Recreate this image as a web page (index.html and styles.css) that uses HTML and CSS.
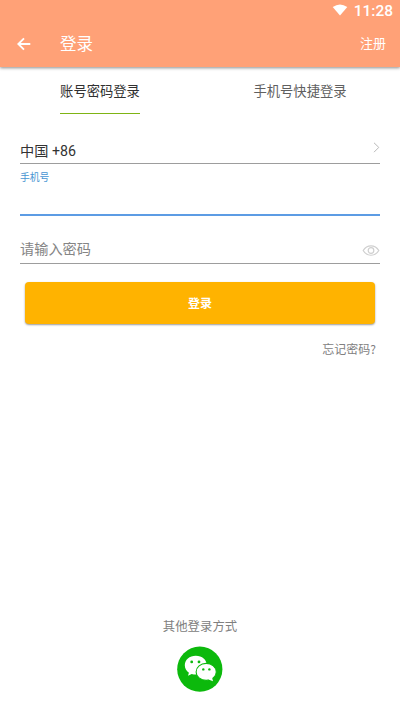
FILE: index.html
```html
<!DOCTYPE html>
<html lang="zh-CN">
<head>
<meta charset="utf-8">
<title>登录</title>
<link rel="stylesheet" href="styles.css">
</head>
<body>
<header class="header">
  <div class="status">
    <svg class="wifi" width="16" height="12" viewBox="0 0 16 12"><path d="M0.7 3Q8-2.2 15.3 3L8 11.6Z" fill="#fff"/></svg>
    <span class="clock">11:28</span>
  </div>
  <div class="toolbar">
    <svg class="back" width="14" height="14" viewBox="0 0 14 14"><path d="M13.300 7H1.5M7 1.3L1.3 7L7 12.7" fill="none" stroke="#fff" stroke-width="1.9"/></svg>
    <h1 class="title">登录</h1>
    <a class="register">注册</a>
  </div>
</header>
<nav class="tabs">
  <div class="tab"><span class="tab-label active">账号密码登录</span></div>
  <div class="tab"><span class="tab-label">手机号快捷登录</span></div>
</nav>
<main class="form">
  <div class="field country">
    <span>中国 +86</span>
    <svg width="7" height="11" viewBox="0 0 7 11"><path d="M1 .8L5.8 5.4L1 10.2" fill="none" stroke="#b8b8b8" stroke-width="1"/></svg>
  </div>
  <div class="field phone"><label>手机号</label></div>
  <div class="field password">
    <span>请输入密码</span>
    <svg width="18" height="13" viewBox="0 0 18 13"><g fill="none" stroke="#cfcfcf" stroke-width="1.2"><path d="M1.2 6.5C5 .2 13 .2 16.8 6.5C13 12.8 5 12.8 1.2 6.5Z"/><circle cx="9" cy="6.5" r="2.8"/></g></svg>
  </div>
  <button class="submit">登录</button>
  <a class="forgot">忘记密码?</a>
</main>
<footer class="other">
  <p>其他登录方式</p>
  <svg width="46" height="46" viewBox="0 0 46 46">
    <circle cx="22.800" cy="23.200" r="22.600" fill="#0cb90c"/>
    <path d="M18.800 9.800C12.400 9.800 7.800 13.800 7.800 19.300C7.800 22.400 9.400 25 11.900 26.700L11 29.800L14.700 28C16 28.400 17.400 28.600 18.800 28.600C25.200 28.600 29.800 24.800 29.800 19.300S25.200 9.800 18.800 9.800Z" fill="#fff"/>
    <ellipse cx="29.200" cy="25.900" rx="10.100" ry="8.500" fill="#fff" stroke="#0cb90c" stroke-width="1.100"/>
    <path d="M31.500 33.400L36 35.300L35 31.300Z" fill="#fff"/>
    <g fill="#0cb90c"><circle cx="14.700" cy="15.900" r="1.400"/><circle cx="22" cy="15.900" r="1.400"/><circle cx="26.300" cy="23.400" r="1.200"/><circle cx="32.400" cy="23.400" r="1.200"/></g>
  </svg>
</footer>
</body>
</html>
```
FILE: styles.css
```css
* { box-sizing: border-box; }
body {
  margin: 0;
  height: 712px;
  display: flex;
  flex-direction: column;
  background: #fff;
  font-family: Roboto, "Noto Sans CJK SC", sans-serif;
  overflow: hidden;
}
.header {
  height: 67px;
  flex: none;
  background: #ffa177;
  color: #fff;
  box-shadow: 0 1px 3px rgba(0, 0, 0, .45);
}
.status {
  height: 22px;
  display: flex;
  justify-content: flex-end;
  padding-right: 7px;
}
.wifi { margin: 4px 6px 0 0; }
.clock { font-size: 15.5px; line-height: 22px; font-weight: 500; }
.toolbar {
  height: 44px;
  display: flex;
  align-items: center;
  padding: 0 14px 0 16.5px;
}
.back { margin-right: 29.5px; }
.title { margin: 2px 0 0; font-size: 16.5px; font-weight: 400; line-height: 24px; }
.register { margin-left: auto; font-size: 13px; line-height: 20px; padding-bottom: 1px; }
.tabs { display: flex; height: 47px; flex: none; }
.tab { flex: 1; display: flex; justify-content: center; }
.tab-label {
  height: 47px;
  line-height: 49px;
  font-size: 13.3px;
  color: #606060;
}
.active { color: #303030; border-bottom: 1px solid #7fb414; }
.form {
  display: flex;
  flex-direction: column;
  padding: 0 20px;
}
.field {
  display: flex;
  justify-content: space-between;
  border-bottom: 1px solid #9d9d9d;
}
.country { height: 50px; padding-top: 26px; font-size: 14.2px; line-height: 23px; color: #333; }
.country svg { margin: 2px 0 0; }
.phone { height: 52px; padding-top: 6px; border-bottom: 2px solid #5c9ce4; }
.phone label { font-size: 9.8px; line-height: 16px; color: #4795d2; }
.password { height: 48px; padding-top: 22px; font-size: 14.2px; line-height: 23px; color: #858585; }
.password svg { margin: 6px 0 0; }
.submit {
  margin: 18px 5px 0;
  height: 42px;
  padding: 0;
  border: 0;
  border-radius: 4px;
  background: #ffb300;
  box-shadow: 0 1px 2px rgba(0, 0, 0, .4);
  color: #fff;
  font: 700 12px/42px "Noto Sans CJK SC", sans-serif;
}
.forgot {
  align-self: flex-end;
  margin: 16px 4px 0 0;
  font-size: 12px;
  line-height: 18px;
  color: #808080;
  font-family: "Noto Sans CJK SC", sans-serif;
}
.other {
  margin-top: auto;
  height: 95px;
  display: flex;
  flex-direction: column;
  align-items: center;
}
.other p { margin: 1px 0 10px; font-size: 12.4px; line-height: 18px; color: #808080; }
```
